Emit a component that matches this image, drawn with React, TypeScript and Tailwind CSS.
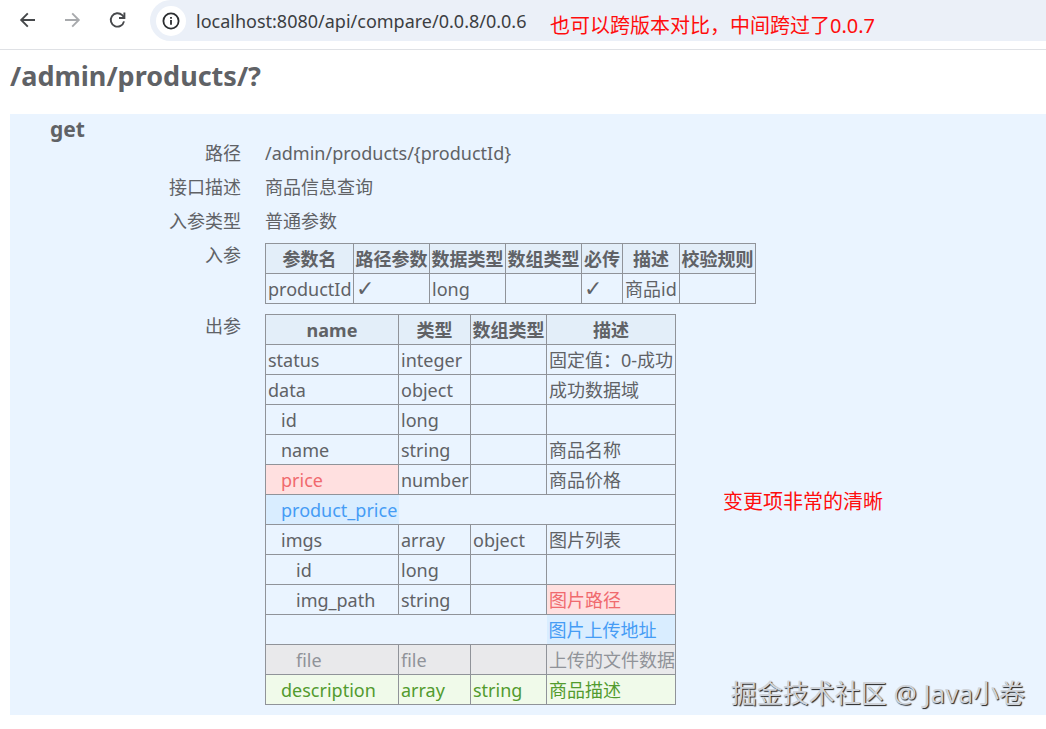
import type { ReactNode } from 'react'

type State = 'removed' | 'changed' | 'ignored' | 'added'

interface Cell {
  text: string
  state?: State
}

interface Row {
  depth?: 0 | 1 | 2
  state?: State
  // A merged row holds only the new values, so its inner borders are dropped.
  merged?: boolean
  cells: (string | Cell)[]
}

const tone: Record<State, string> = {
  removed: 'bg-[#ffe0e0] text-[#f06a6e]',
  changed: 'bg-[#d9edff] text-[#459cf5]',
  ignored: 'bg-[#e9e9eb] text-[#909399]',
  added: 'bg-[#f0faea] text-[#529b2e]',
}

const indent = ['pl-[2px]', 'pl-[15px]', 'pl-[30px]']

const paramColumns = [
  { name: '参数名', width: 'w-[88px]' },
  { name: '路径参数', width: 'w-[76px]' },
  { name: '数据类型', width: 'w-[76px]' },
  { name: '数组类型', width: 'w-[76px]' },
  { name: '必传', width: 'w-[41px]' },
  { name: '描述', width: 'w-[57px]' },
  { name: '校验规则', width: 'w-[76px]' },
]

const paramRows: Row[] = [{ cells: ['productId', '✓', 'long', '', '✓', '商品id', ''] }]

const resultColumns = [
  { name: 'name', width: 'w-[133px]' },
  { name: '类型', width: 'w-[72px]' },
  { name: '数组类型', width: 'w-[76px]' },
  { name: '描述', width: 'w-[129px]' },
]

const resultRows: Row[] = [
  { cells: ['status', 'integer', '', '固定值：0-成功'] },
  { cells: ['data', 'object', '', '成功数据域'] },
  { depth: 1, cells: ['id', 'long', '', ''] },
  { depth: 1, cells: ['name', 'string', '', '商品名称'] },
  { depth: 1, cells: [{ text: 'price', state: 'removed' }, 'number', '', '商品价格'] },
  { depth: 1, merged: true, cells: [{ text: 'product_price', state: 'changed' }, '', '', ''] },
  { depth: 1, cells: ['imgs', 'array', 'object', '图片列表'] },
  { depth: 2, cells: ['id', 'long', '', ''] },
  { depth: 2, cells: ['img_path', 'string', '', { text: '图片路径', state: 'removed' }] },
  { depth: 2, merged: true, cells: ['', '', '', { text: '图片上传地址', state: 'changed' }] },
  { depth: 2, state: 'ignored', cells: ['file', 'file', '', '上传的文件数据'] },
  { depth: 1, state: 'added', cells: ['description', 'array', 'string', '商品描述'] },
]

function DiffTable({ label, columns, rows }: { label: string; columns: { name: string; width: string }[]; rows: Row[] }) {
  return (
    <table aria-label={label} className="border-collapse border border-[#909399] whitespace-nowrap">
      <thead>
        <tr>
          {columns.map((c) => (
            <th key={c.name} className={`${c.width} h-[30px] border border-[#909399] bg-[#e3eef9] p-0 text-center font-bold`}>
              {c.name}
            </th>
          ))}
        </tr>
      </thead>
      <tbody>
        {rows.map((row, r) => (
          <tr key={r}>
            {row.cells.map((cell, i) => {
              const { text, state } = typeof cell === 'string' ? { text: cell, state: row.state } : cell
              return (
                <td
                  key={i}
                  className={`h-[30px] border-[#909399] py-0 pr-0 ${row.merged ? 'border-y' : 'border'} ${indent[i === 0 ? (row.depth ?? 0) : 0]} ${state ? tone[state] : ''}`}
                >
                  {text === '✓' ? <span className="block font-['DejaVu_Sans',sans-serif] text-[22px] font-bold leading-6">{text}</span> : text}
                </td>
              )
            })}
          </tr>
        ))}
      </tbody>
    </table>
  )
}

function Field({ label, children }: { label: string; children: ReactNode }) {
  return (
    <div className="grid grid-cols-[191px_1fr] gap-6 py-[5px]">
      <dt className="text-right">{label}</dt>
      <dd>{children}</dd>
    </div>
  )
}

function BrowserBar() {
  return (
    <header className="relative flex h-[50px] items-start border-b border-[#dfe1e5] bg-white pl-[17px]">
      <nav className="flex h-10 items-center gap-[25px] text-[#46484b]">
        <button aria-label="Back">
          <svg width="20" height="20" viewBox="0 0 20 20" fill="none" stroke="currentColor" strokeWidth="1.9">
            <path d="M18 10H4.5M10.8 3.4 4.2 10l6.6 6.6" />
          </svg>
        </button>
        <button aria-label="Forward" className="text-[#a8aaad]">
          <svg width="20" height="20" viewBox="0 0 20 20" fill="none" stroke="currentColor" strokeWidth="1.9">
            <path d="M3 10h13.5M10.2 3.4l6.6 6.6-6.6 6.6" />
          </svg>
        </button>
        <button aria-label="Reload">
          <svg width="20" height="20" viewBox="0 0 20 20" fill="none" stroke="currentColor" strokeWidth="1.9">
            <path d="M17 11.4A6.7 6.7 0 1 1 15.2 5.2L17.2 7.4" />
            <path d="M17.4 2.6v5.4h-5.4" />
          </svg>
        </button>
      </nav>
      <div className="ml-[23px] flex h-[41px] flex-1 items-center rounded-bl-[21px] rounded-tl-[21px] bg-[#ebf0f8] pl-[6px]">
        <button aria-label="Site information" className="flex size-[30px] items-center justify-center rounded-full bg-white text-[#2b2d30]">
          <svg width="18" height="18" viewBox="0 0 18 18" fill="none" stroke="currentColor" strokeWidth="1.8">
            <circle cx="9" cy="9" r="7.6" />
            <path d="M9 8v4.8M9 5v1.8" />
          </svg>
        </button>
        <input
          aria-label="Address"
          defaultValue="localhost:8080/api/compare/0.0.8/0.0.6"
          className="ml-[10px] min-w-0 flex-1 bg-transparent text-[18px] text-[#3c3e42] outline-none"
        />
      </div>
      <p className="absolute left-[550px] top-[11px] text-[20px] leading-[30px] text-[#ff0d0d]">也可以跨版本对比，中间跨过了0.0.7</p>
    </header>
  )
}

export default function App() {
  return (
    <div className="min-h-screen bg-white font-['Noto_Sans','Noto_Sans_CJK_SC',sans-serif] text-[18px] leading-6 text-[#606266]">
      <BrowserBar />
      <main className="pb-3 pl-[10px]">
        <h1 className="py-[10px] text-[27px] font-bold leading-8">/admin/products/?</h1>
        <section className="relative mt-3 bg-[#eaf4ff] pb-[5px] pl-10">
          <h2 className="text-[21px] font-bold leading-[30px]">get</h2>
          <dl className="-mt-2">
            <Field label="路径">/admin/products/{'{productId}'}</Field>
            <Field label="接口描述">商品信息查询</Field>
            <Field label="入参类型">普通参数</Field>
            <Field label="入参">
              <DiffTable label="入参" columns={paramColumns} rows={paramRows} />
            </Field>
            <Field label="出参">
              <DiffTable label="出参" columns={resultColumns} rows={resultRows} />
            </Field>
          </dl>
          <p className="absolute left-[713px] top-[373px] text-[20px] leading-[30px] text-[#ff0d0d]">变更项非常的清晰</p>
          <p className="absolute bottom-1 right-[21px] text-[26px] leading-9 text-[#cfd3d9] [text-shadow:1px_1px_1px_#222]">
            掘金技术社区 @ Java小卷
          </p>
        </section>
      </main>
    </div>
  )
}
